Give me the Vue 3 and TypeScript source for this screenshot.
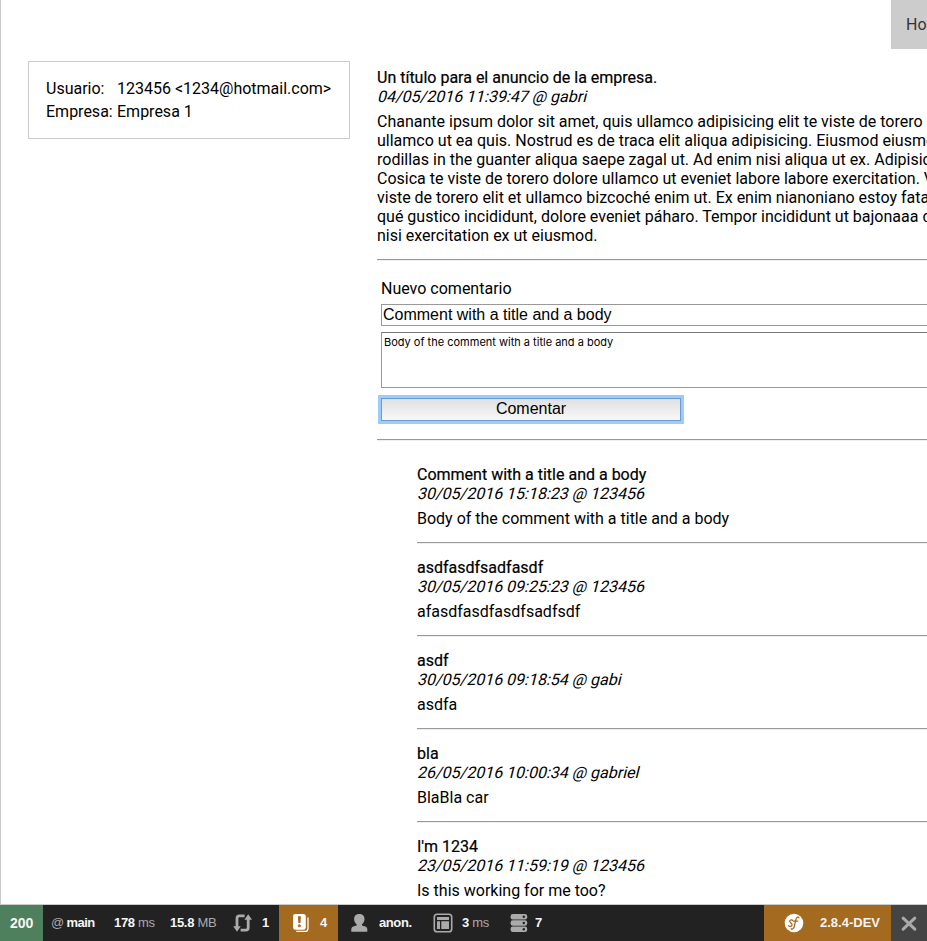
<script setup lang="ts">
interface Comment {
  title: string
  meta: string
  body: string
}

const articleLines: string[] = [
  'Chanante ipsum dolor sit amet, quis ullamco adipisicing elit te viste de torero saepe',
  'ullamco ut ea quis. Nostrud es de traca elit aliqua adipisicing. Eiusmod eiusmod',
  'rodillas in the guanter aliqua saepe zagal ut. Ad enim nisi aliqua ut ex. Adipisicing',
  'Cosica te viste de torero dolore ullamco ut eveniet labore labore exercitation. Veniam',
  'viste de torero elit et ullamco bizcoché enim ut. Ex enim nianoniano estoy fatal',
  'qué gustico incididunt, dolore eveniet páharo. Tempor incididunt ut bajonaaa dolore',
  'nisi exercitation ex ut eiusmod.',
]

const comments: Comment[] = [
  { title: 'Comment with a title and a body', meta: '30/05/2016 15:18:23 @ 123456', body: 'Body of the comment with a title and a body' },
  { title: 'asdfasdfsadfasdf', meta: '30/05/2016 09:25:23 @ 123456', body: 'afasdfasdfasdfsadfsdf' },
  { title: 'asdf', meta: '30/05/2016 09:18:54 @ gabi', body: 'asdfa' },
  { title: 'bla', meta: '26/05/2016 10:00:34 @ gabriel', body: 'BlaBla car' },
  { title: "I'm 1234", meta: '23/05/2016 11:59:19 @ 123456', body: 'Is this working for me too?' },
]
</script>

<template>
  <div class="screen">
    <div class="page">
      <nav class="nav"><a class="nav-item">Home</a></nav>
      <div class="columns">
        <aside class="user-box">
          <span>Usuario:</span><span>123456 &lt;1234@hotmail.com&gt;</span>
          <span>Empresa:</span><span>Empresa 1</span>
        </aside>
        <main class="content">
          <article>
            <h1 class="title">Un título para el anuncio de la empresa.</h1>
            <div class="meta">04/05/2016 11:39:47 @ gabri</div>
            <div class="body">
              <div v-for="line in articleLines" :key="line">{{ line }}</div>
            </div>
          </article>
          <div class="rule article-rule"></div>
          <form class="form" @submit.prevent>
            <label class="label">Nuevo comentario</label>
            <div class="field">Comment with a title and a body</div>
            <div class="area">Body of the comment with a title and a body</div>
            <button class="submit" type="button">Comentar</button>
          </form>
          <div class="rule form-rule"></div>
          <section class="comments">
            <article v-for="c in comments" :key="c.meta" class="comment">
              <h2 class="title">{{ c.title }}</h2>
              <div class="meta">{{ c.meta }}</div>
              <div class="body">{{ c.body }}</div>
              <div class="rule"></div>
            </article>
          </section>
        </main>
      </div>
    </div>

    <footer class="toolbar">
      <div class="block status">200</div>
      <div class="block route"><i>@</i> main</div>
      <div class="block time">178 <i>ms</i></div>
      <div class="block memory">15.8 <i>MB</i></div>
      <div class="block ajax">
        <svg width="20" height="20" viewBox="0 0 20 20">
          <path d="M11.600 2.900H6.400Q4 2.900 4 5.300V14M7.600 17.100H12.800Q15.200 17.100 15.200 14.700V6" fill="none" stroke="#aaa" stroke-width="2.800" />
          <path d="M.2 13.200h7.600L4 18.800zM11.400 6.800H19L15.200 1.200z" fill="#aaa" />
        </svg>
        <span>1</span>
      </div>
      <div class="block logs">
        <svg width="18" height="20" viewBox="0 0 18 20">
          <path d="M4.200 18.400H13q3 0 3-3V4.400" fill="none" stroke="#fff" stroke-width="1.300" />
          <rect x="1" y="1" width="12.800" height="15.800" rx="2.400" fill="#fff" />
          <path d="M5.900 3.200h3L8.500 10H6.300z" fill="#a46a1f" />
          <circle cx="7.400" cy="12.800" r="1.500" fill="#a46a1f" />
        </svg>
        <span>4</span>
      </div>
      <div class="block user">
        <svg width="18" height="20" viewBox="0 0 18 20">
          <path d="M8.300 1c3.100 0 5.200 2 5.200 4.900 0 2.200-.9 4.200-2.500 5.300v1.200l3.400 1.200c1.400.5 1.900 1.500 1.900 3v2.200H.3v-2.200c0-1.500.5-2.500 1.900-3l3.400-1.200v-1.200C4 10.100 3.100 8.100 3.100 5.900 3.100 3 5.200 1 8.300 1z" fill="#aaa" />
        </svg>
        <span>anon.</span>
      </div>
      <div class="block twig">
        <svg width="20" height="20" viewBox="0 0 20 20">
          <rect x="1.300" y="1.300" width="17.400" height="17.400" rx="2.800" fill="none" stroke="#aaa" stroke-width="1.600" />
          <path d="M4 4h12v3H4zM4 8.200h3V16H4zM8.300 8.200H16V16H8.300z" fill="#aaa" />
        </svg>
        <span>3 <i>ms</i></span>
      </div>
      <div class="block db">
        <svg width="18" height="20" viewBox="0 0 18 20">
          <rect v-for="y in [1, 7.300, 13.600]" :key="y" x=".6" :y="y" width="16.600" height="5.400" rx="2.200" fill="#aaa" />
          <circle v-for="y in [3.700, 10, 16.300]" :key="y" cx="13.800" :cy="y" r="1.200" fill="#222" />
        </svg>
        <span>7</span>
      </div>
      <div class="block version">
        <svg width="20" height="20" viewBox="0 0 20 20">
          <circle cx="10" cy="10" r="9.300" fill="#fff" />
          <path d="M8.700 7.700C8.400 6.500 5.600 6.600 5.700 8.300C5.800 9.800 8.300 10.200 8.100 12C7.900 13.800 4.900 13.800 4.700 12.600M15 4.900C14.500 3.400 12.500 3.800 11.800 6.900L10.400 13.100C9.900 15.600 8.200 16.700 7.300 15.700M9.700 8.200H13.700" fill="none" stroke="#a46a1f" stroke-width="1.300" stroke-linecap="round" />
        </svg>
        <span>2.8.4-DEV</span>
      </div>
      <div class="block close">
        <svg width="16" height="16" viewBox="0 0 16 16">
          <path d="M2.200 3.200 13.800 14.200M13.800 3.200 2.200 14.200" stroke="#aaa" stroke-width="3" stroke-linecap="round" />
        </svg>
      </div>
    </footer>
  </div>
</template>

<style>
body {
  overflow: hidden;
  background: #fff;
}
</style>

<style scoped>
.screen {
  display: flex;
  flex-direction: column;
  width: 927px;
  height: 941px;
  overflow: hidden;
  font: 16px/19px Roboto, sans-serif;
  color: #000;
}
.page {
  box-sizing: border-box;
  height: 905px;
  flex: none;
  overflow: hidden;
  border-left: 1px solid #ccc;
  border-bottom: 1px solid #ccc;
}
.nav {
  display: flex;
  height: 49px;
  padding-left: 890px;
}
.nav-item {
  flex: none;
  padding: 15px;
  background: #ccc;
  color: #333;
}
.columns {
  display: flex;
  align-items: flex-start;
  padding: 12px 0 0 27px;
}
.user-box {
  box-sizing: border-box;
  flex: none;
  display: grid;
  grid-template-columns: 71px auto;
  grid-auto-rows: 23px;
  align-content: start;
  width: 322px;
  height: 78px;
  padding: 17px;
  border: 1px solid #ccc;
  white-space: nowrap;
}
.content {
  flex: none;
  width: 700px;
  margin-left: 27px;
  padding-top: 7px;
  white-space: nowrap;
}
.title {
  margin: 0;
  font-size: 16px;
  font-weight: 400;
  -webkit-text-stroke: 0.2px #000;
}
.meta {
  width: max-content;
  transform: skewX(-14deg);
  transform-origin: 0 15px;
}
.body {
  margin-top: 6px;
}
.rule {
  height: 1px;
  border-top: 1px solid #999;
  background: #eee;
}
.article-rule {
  margin: 14px 0 18px;
}
.form {
  display: flex;
  flex-direction: column;
  align-items: flex-start;
  padding-left: 4px;
}
.field {
  box-sizing: border-box;
  width: 640px;
  height: 22px;
  margin-top: 6px;
  padding: 1px 1px;
  border: 1px solid #999;
  font: 16px/18px "Liberation Sans", Arial, sans-serif;
}
.area {
  box-sizing: border-box;
  width: 640px;
  height: 56px;
  margin-top: 6px;
  padding: 2px;
  border: 1px solid #999;
  border-top-color: #777;
  font: 11px/14px Inter, sans-serif;
}
.submit {
  width: 300px;
  height: 23px;
  margin-top: 10px;
  padding: 0 0 2px;
  border: 1px solid #6b9bd0;
  border-radius: 0;
  box-shadow: 0 0 0 3px #9fcbfb;
  background: linear-gradient(#e0e0e0, #f8f8f8);
  color: #000;
  font: 16px/19px "Liberation Sans", Arial, sans-serif;
}
.form-rule {
  margin-top: 18px;
}
.comments {
  display: flex;
  flex-direction: column;
  gap: 14px;
  padding: 24px 0 0 40px;
}
.comment .rule {
  margin-top: 14px;
}
.toolbar {
  display: flex;
  flex: none;
  height: 36px;
  background: #222;
  color: #f5f5f5;
  font: bold 13px/36px "Liberation Sans", Arial, sans-serif;
  white-space: nowrap;
}
.block {
  box-sizing: border-box;
  display: flex;
  flex: none;
  align-items: center;
  white-space: pre;
}
.block i {
  color: #aaa;
  font-style: normal;
  font-weight: 400;
}
.status {
  width: 43px;
  padding-left: 10px;
  background: #4f805d;
  font-size: 14px;
}
.route {
  width: 71px;
  padding-left: 8px;
  letter-spacing: -0.6px;
}
.time {
  width: 56px;
  letter-spacing: -0.35px;
}
.memory {
  width: 63px;
  letter-spacing: -0.3px;
}
.ajax {
  width: 46px;
  gap: 9px;
}
.logs {
  width: 59px;
  padding-left: 13px;
  gap: 10px;
  background: #a46a1f;
}
.user {
  width: 95px;
  padding-left: 13px;
  gap: 10px;
  letter-spacing: -0.4px;
}
.twig {
  width: 77px;
  gap: 9px;
  letter-spacing: -0.3px;
}
.db {
  gap: 7px;
}
.version {
  width: 127px;
  margin-left: auto;
  padding-left: 20px;
  gap: 16px;
  background: #a46a1f;
}
.close {
  width: 36px;
  justify-content: center;
  background: #444;
}
</style>
